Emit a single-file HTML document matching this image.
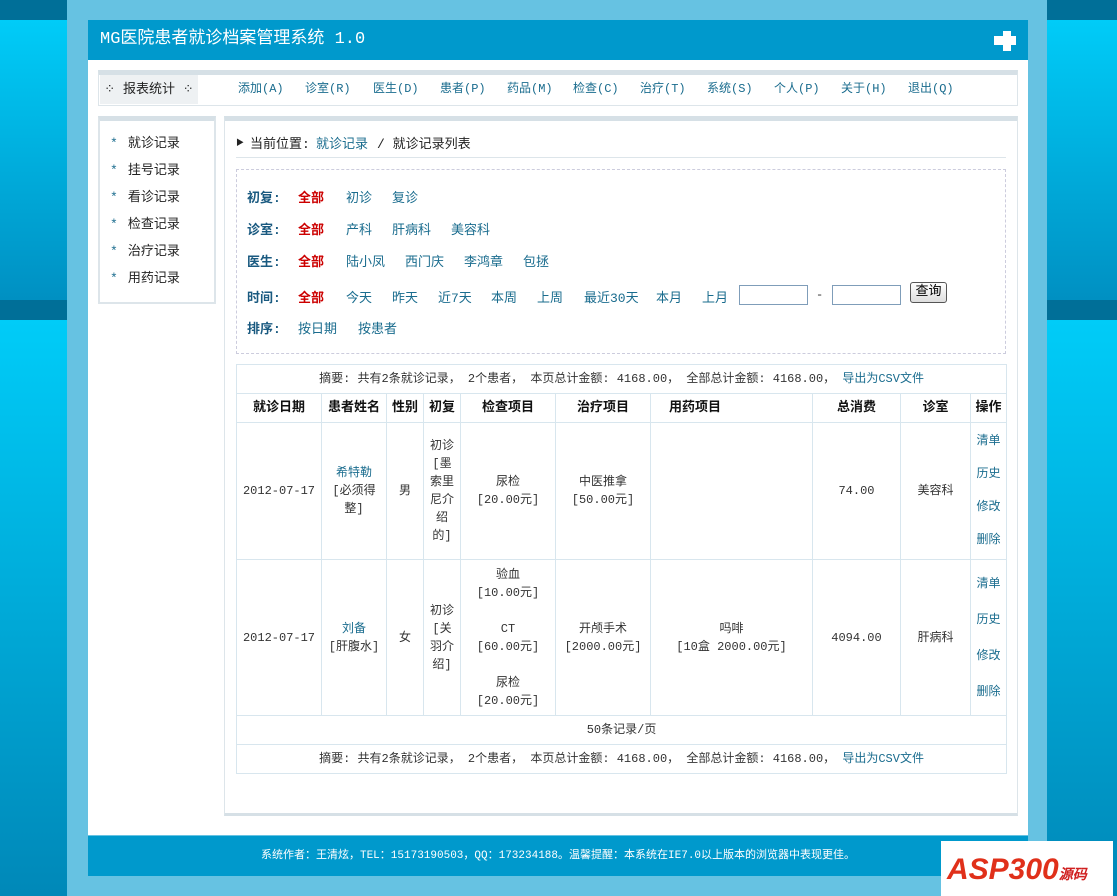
<!DOCTYPE html>
<html><head><meta charset="utf-8"><style>
*{margin:0;padding:0;box-sizing:border-box}
html{overflow:hidden;height:896px}
body{width:1117px;height:896px;position:relative;overflow:hidden;background:#66c2e2;font:12px "Liberation Mono","Noto Sans CJK SC","WenQuanYi Zen Hei",monospace;color:#333}
.abs{position:absolute;white-space:nowrap}
.side{position:absolute;top:0;height:896px;background:linear-gradient(#006f98 0,#006f98 20px,#00ccf8 20px,#0090c2 300px,#006f98 300px,#006f98 320px,#00ccf8 320px,#0088b8 896px)}
a{color:#1a6c8e;text-decoration:none}
.red{color:#c00;font-weight:bold;font-size:13px}
.lbl{color:#1a5a80;font-weight:bold;font-size:13px}
.f a{font-size:13px}
table{border-collapse:collapse;table-layout:fixed;position:absolute;left:236px;top:364px;width:770px}
td,th{border:1px solid #d8e6ee;text-align:center;font-size:12px;line-height:18px;color:#333;padding:0 4px}
th{font-weight:bold;color:#111;font-size:13px;padding:0}
.ops a{display:block;line-height:33px}
.ops{padding:0}
</style></head><body>
<div class="side" style="left:0;width:67px"></div>
<div class="side" style="left:1047px;width:70px"></div>
<div class="abs" style="left:88px;top:20px;width:940px;height:815px;background:#fff"></div>
<div class="abs" style="left:88px;top:20px;width:940px;height:40px;background:#0099cc;color:#fff;font-size:17px;line-height:40px;padding-left:12px">MG医院患者就诊档案管理系统 1.0</div>
<div class="abs" style="left:1003px;top:31px;width:8px;height:20px;background:#fff"></div>
<div class="abs" style="left:994px;top:36px;width:22px;height:9px;background:#fff"></div>
<!-- nav -->
<div class="abs" style="left:98px;top:70px;width:920px;height:36px;border:1px solid #dde5ea;border-top:5px solid #d6e0e6"></div>
<div class="abs" style="left:100px;top:75px;width:98px;height:29px;background:#eef1f3;line-height:29px;text-align:center;font-size:13px;color:#222">⁘ 报表统计 ⁘</div>
<div class="abs" style="left:0;top:75px;line-height:29px">
<a class="abs" style="left:238px">添加(A)</a><a class="abs" style="left:305px">诊室(R)</a><a class="abs" style="left:373px">医生(D)</a><a class="abs" style="left:440px">患者(P)</a><a class="abs" style="left:507px">药品(M)</a><a class="abs" style="left:573px">检查(C)</a><a class="abs" style="left:640px">治疗(T)</a><a class="abs" style="left:707px">系统(S)</a><a class="abs" style="left:774px">个人(P)</a><a class="abs" style="left:841px">关于(H)</a><a class="abs" style="left:908px">退出(Q)</a></div>
<!-- left menu -->
<div class="abs" style="left:98px;top:116px;width:118px;height:188px;border:2px solid #dde5ea;border-top:5px solid #d6e0e6"></div>
<div class="abs" style="left:110px;top:130px;font-size:13px;line-height:27px;color:#222">
<div><span style="color:#1a6c8e;margin-right:10px">*</span>就诊记录</div><div><span style="color:#1a6c8e;margin-right:10px">*</span>挂号记录</div><div><span style="color:#1a6c8e;margin-right:10px">*</span>看诊记录</div><div><span style="color:#1a6c8e;margin-right:10px">*</span>检查记录</div><div><span style="color:#1a6c8e;margin-right:10px">*</span>治疗记录</div><div><span style="color:#1a6c8e;margin-right:10px">*</span>用药记录</div></div>
<!-- content panel -->
<div class="abs" style="left:224px;top:116px;width:794px;height:700px;border:1px solid #dde5ea;border-top:5px solid #d6e0e6;border-bottom:3px solid #d6e0e6"></div>
<div class="abs" style="left:236px;top:137px;color:#222;font-size:8px">▶</div>
<div class="abs" style="left:250px;top:133px;font-size:13px;color:#222">当前位置:</div>
<a class="abs" style="left:316px;top:133px;font-size:13px">就诊记录</a>
<div class="abs" style="left:377px;top:133px;font-size:13px;color:#222">/ 就诊记录列表</div>
<div class="abs" style="left:236px;top:157px;width:770px;height:1px;background:#dde5ea"></div>
<div class="abs" style="left:236px;top:169px;width:770px;height:185px;border:1px dashed #ccd"></div>
<div class="f">
<span class="abs lbl" style="left:247px;top:187px">初复:</span><span class="abs red" style="left:298px;top:187px">全部</span><a class="abs" style="left:346px;top:187px">初诊</a><a class="abs" style="left:392px;top:187px">复诊</a>
<span class="abs lbl" style="left:247px;top:219px">诊室:</span><span class="abs red" style="left:298px;top:219px">全部</span><a class="abs" style="left:346px;top:219px">产科</a><a class="abs" style="left:392px;top:219px">肝病科</a><a class="abs" style="left:451px;top:219px">美容科</a>
<span class="abs lbl" style="left:247px;top:251px">医生:</span><span class="abs red" style="left:298px;top:251px">全部</span><a class="abs" style="left:346px;top:251px">陆小凤</a><a class="abs" style="left:405px;top:251px">西门庆</a><a class="abs" style="left:464px;top:251px">李鸿章</a><a class="abs" style="left:523px;top:251px">包拯</a>
<span class="abs lbl" style="left:247px;top:287px">时间:</span><span class="abs red" style="left:298px;top:287px">全部</span><a class="abs" style="left:346px;top:287px">今天</a><a class="abs" style="left:392px;top:287px">昨天</a><a class="abs" style="left:438px;top:287px">近7天</a><a class="abs" style="left:491px;top:287px">本周</a><a class="abs" style="left:537px;top:287px">上周</a><a class="abs" style="left:584px;top:287px">最近30天</a><a class="abs" style="left:656px;top:287px">本月</a><a class="abs" style="left:702px;top:287px">上月</a>
<span class="abs lbl" style="left:247px;top:318px">排序:</span><a class="abs" style="left:298px;top:318px">按日期</a><a class="abs" style="left:358px;top:318px">按患者</a>
</div>
<div class="abs" style="left:739px;top:285px;width:69px;height:20px;border:1px solid #7f9db9"></div>
<div class="abs" style="left:816px;top:288px;color:#333">-</div>
<div class="abs" style="left:832px;top:285px;width:69px;height:20px;border:1px solid #7f9db9"></div>
<div class="abs" style="left:910px;top:282px;width:37px;height:21px;border:1px solid #555;border-radius:3px;background:linear-gradient(#fff,#ddd);font-size:13px;text-align:center;line-height:18px;color:#000">查询</div>
<table>
<colgroup><col style="width:85px"><col style="width:65px"><col style="width:37px"><col style="width:37px"><col style="width:95px"><col style="width:95px"><col style="width:162px"><col style="width:88px"><col style="width:70px"><col style="width:36px"></colgroup>
<tr style="height:29px"><td colspan="10">摘要: 共有2条就诊记录， 2个患者， 本页总计金额: 4168.00， 全部总计金额: 4168.00， <a>导出为CSV文件</a></td></tr>
<tr style="height:29px"><th>就诊日期</th><th>患者姓名</th><th>性别</th><th>初复</th><th>检查项目</th><th>治疗项目</th><th style="text-align:left;padding-left:18px">用药项目</th><th>总消费</th><th>诊室</th><th>操作</th></tr>
<tr style="height:137px"><td>2012-07-17</td><td><a>希特勒</a><br>[必须得整]</td><td>男</td><td>初诊[墨索里尼介绍的]</td><td>尿检<br>[20.00元]</td><td>中医推拿<br>[50.00元]</td><td></td><td>74.00</td><td>美容科</td><td class="ops"><a>清单</a><a>历史</a><a>修改</a><a>删除</a></td></tr>
<tr style="height:156px"><td>2012-07-17</td><td><a>刘备</a><br>[肝腹水]</td><td>女</td><td>初诊[关羽介绍]</td><td>验血<br>[10.00元]<br><br>CT<br>[60.00元]<br><br>尿检<br>[20.00元]</td><td>开颅手术<br>[2000.00元]</td><td>吗啡<br>[10盒 2000.00元]</td><td>4094.00</td><td>肝病科</td><td class="ops"><a style="line-height:36px">清单</a><a style="line-height:36px">历史</a><a style="line-height:36px">修改</a><a style="line-height:36px">删除</a></td></tr>
<tr style="height:29px"><td colspan="10">50条记录/页</td></tr>
<tr style="height:29px"><td colspan="10">摘要: 共有2条就诊记录， 2个患者， 本页总计金额: 4168.00， 全部总计金额: 4168.00， <a>导出为CSV文件</a></td></tr>
</table>
<div class="abs" style="left:88px;top:836px;width:940px;height:40px;background:#0099cc;color:#fff;text-align:center;line-height:40px;font-size:11px">系统作者：王清炫，TEL：15173190503，QQ：173234188。温馨提醒：本系统在IE7.0以上版本的浏览器中表现更佳。</div>
<div class="abs" style="left:941px;top:841px;width:172px;height:55px;background:#fff;font:bold italic 30px 'Liberation Sans',sans-serif;color:#e0301a;line-height:58px;padding-left:6px">ASP300<span style="font-size:14px;color:#d02020">源码</span></div>
</body></html>
